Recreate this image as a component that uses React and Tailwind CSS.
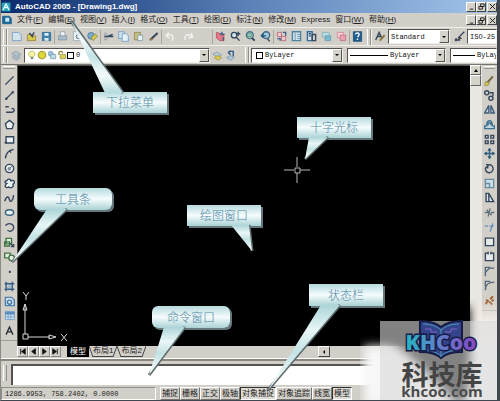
import React from 'react';
import clsx from 'clsx';

const MENUS = [
  ['文件', 'F'], ['编辑', 'E'], ['视图', 'V'], ['插入', 'I'], ['格式', 'O'], ['工具', 'T'],
  ['绘图', 'D'], ['标注', 'N'], ['修改', 'M'], ['Express', ''], ['窗口', 'W'], ['帮助', 'H'],
];

const N = '#34465c';
const B = '#5b8fc0';
const Y = '#d8c84a';
const L = '#d3e4ef';

// Every drawing sits in a 16x16 box
const ICONS = {
  app: <><rect x="1" y="1" width="14" height="14" fill="#2aa3b8" /><path d="M3 13 8 3l5 10M5 9h6" stroke="#e8ffff" strokeWidth="2" /></>,
  doc: <><path d="M1 2h11l3 4v8H1z" fill="#176c9e" stroke="#114a78" /><path d="M6 5h5v5H6z" fill="#bfe4f5" stroke="#fff" /></>,
  new: <path d="M2 2h9l4 4v8H2z" fill={L} stroke={B} />,
  open: <><path d="M2 5h4l2 2h6v7H2z" fill={Y} stroke="#8a7a35" /><path d="m5 3 5 6M12 2 8 8" stroke={N} strokeWidth="2" /></>,
  save: <><path d="M2 2h12v12H2z" fill="#3f82b0" stroke="#275b86" /><path d="M5 3h6v4H5zM5 10h6v4H5z" fill="#d7eef5" /></>,
  print: <><path d="M5 7V1h6l1 6" fill="#eef5fa" stroke="#8698a8" /><path d="M2 7h12v6H2z" fill="#a9bccb" stroke="#7d8f9e" /></>,
  preview: <><path d="M2 1h8l3 3v10H2z" fill="#edf3f7" stroke="#8b9eb0" /><circle cx="9" cy="8" r="3" fill={L} stroke={N} /><path d="m11 10 4 5" stroke={N} strokeWidth="2" /></>,
  publish: <><circle cx="6" cy="7" r="5" fill="#78a9cf" stroke="#436e94" /><path d="m6 10 6-6 3 4-6 6z" fill={Y} stroke="#83813a" /></>,
  cut: <><path d="M2 8h13M7 8l7-3" stroke={N} strokeWidth="2" /><circle cx="4" cy="5" r="2" stroke="#7b8998" /><circle cx="4" cy="11" r="2" stroke="#7b8998" /></>,
  copy: <><path d="M1 1h8v10H1z" fill={L} stroke={B} /><path d="M6 4h6l3 3v8H6z" fill="#e5f2fa" stroke={B} /></>,
  paste: <><path d="M2 2h9v11H2z" fill="#c8bf7c" stroke="#857e52" /><path d="M7 6h7v8H7z" fill="#e8f1f4" stroke="#6e91a8" /></>,
  brush: <><path d="M3 13 14 3" stroke={N} strokeWidth="3" /><path d="m2 14 3-4 3 2z" fill="#a47c36" /></>,
  undo: <path d="M12 14c3-8-2-10-7-8m2-4L3 7l5 3" stroke="#f4f3f0" strokeWidth="2" />,
  redo: <path d="M3 13C2 4 9 4 13 8m-1-5 2 6-6 1" stroke="#f4f3f0" strokeWidth="2" />,
  pan: <><path d="M2 2v8l5 4h6V6H8L6 3z" fill="#e4778a" stroke="#af4358" /><path d="M10 1v5m-3-2 7 1M12 9v5" stroke="#41627f" strokeWidth="2" /></>,
  zoomIn: <><circle cx="6" cy="6" r="4" fill={L} stroke={N} strokeWidth="2" /><path d="m9 9 5 5M12 1v6m-3-3h6" stroke={N} strokeWidth="2" /></>,
  zoomWin: <><circle cx="7" cy="6" r="5" fill="#b4d8cf" stroke="#476f80" strokeWidth="2" /><path d="M4 4h5v4H4z" stroke="#308564" /><path d="m10 10 4 4" stroke={N} strokeWidth="3" /></>,
  zoomPrev: <><circle cx="9" cy="6" r="5" fill="#a4cadf" stroke="#3d6585" strokeWidth="2" /><path d="M2 7h7M5 4 2 7l3 3" stroke="#215277" strokeWidth="2" /><path d="m11 11 3 4" stroke={N} strokeWidth="2" /></>,
  props: <><path d="M2 2h6v6H2zM8 8h6v6H8z" fill="#efcbd2" stroke="#b44e65" /><path d="M10 2h4v5M2 11h4v3" stroke="#3e618b" strokeWidth="2" /></>,
  center: <><path d="M2 1h12v13H2z" fill={L} stroke="#4c83a0" strokeWidth="2" /><path d="M6 3v10M9 5h4M9 8h4M9 11h4" stroke="#4a7894" /></>,
  palettes: <><path d="M2 1h7v13H2z" fill={L} stroke="#356e9d" strokeWidth="2" /><path d="M9 5h5v9H9zM4 4h3M4 7h3" stroke={N} strokeWidth="2" /></>,
  sheets: <><path d="M2 2h10v7H2z" fill="#bddce2" stroke="#77a9b7" /><path d="M6 7h8v7H6z" fill="#77bcd0" stroke="#5794a8" /></>,
  markup: <><path d="M2 2h9v8H2z" fill="#f5d1d7" stroke="#ce7b8c" /><path d="M6 6h8v8H6z" fill="#eaa4af" stroke="#bf6575" /></>,
  help: <><path d="M2 1h12v14H2z" fill="#1b5f94" stroke="#134267" /><path d="M5 5c1-4 7-2 5 1L8 9m0 2v2" stroke="#fff" strokeWidth="2" /></>,
  textStyle: <><path d="m1 13 5-11 4 9M4 8h5" stroke={N} strokeWidth="2" /><path d="m7 14 7-8" stroke="#8b793f" strokeWidth="3" /></>,
  dimStyle: <><path d="M1 13h8M3 10v5M6 10l9-9" stroke={N} strokeWidth="2" /><path d="m5 13 3-5 4 3z" fill="#463f43" /></>,
  layers: <path d="m1 5 6-3 7 4-6 3zM1 8l7 4 6-4M1 11l7 4 6-4" fill="#b3c5d0" stroke="#8395a1" />,
  bulb: <><path d="M5 11c-5-4-2-9 3-9s7 6 2 9z" fill="#f5f2a4" stroke="#a8a447" /><path d="M6 13h4" stroke={N} strokeWidth="2" /></>,
  sun: <circle cx="8" cy="8" r="6" fill="#dfd638" stroke="#aaa23c" strokeWidth="2" />,
  freeze: <><circle cx="6" cy="6" r="4" fill="#a1c6db" stroke="#6089aa" /><path d="M6 7h8v7H6z" fill="#c2dce8" stroke="#6089aa" /></>,
  lock: <><path d="M3 8V5c0-4 6-4 6 0" stroke="#898838" strokeWidth="2" /><path d="M5 7h9v7H5z" fill="#d9d254" stroke="#8c8843" /></>,
  layerPrev: <><path d="m1 6 6-3 7 4-6 3z" fill="#b5cbd5" stroke="#84959e" /><path d="m3 11 5-3 6 3-5 4z" fill={Y} stroke="#9d913d" /></>,
  layerBack: <><path d="m2 11 6-3 6 3-6 4z" fill="#a9c5d7" stroke="#7894a7" /><path d="M5 2h7v7M9 1 5 4l3 3" stroke="#325987" strokeWidth="2" /></>,

  line: <path d="M2 14 14 2" stroke={N} strokeWidth="2" />,
  xline: <><path d="M2 14 14 2" stroke={N} strokeWidth="2" /><path d="M2 11h3v3H2zM11 2h3v3h-3z" fill={N} /></>,
  pline: <path d="M2 4h5m-4 8h8c5 0 5-7 0-5" stroke={N} strokeWidth="2" />,
  polygon: <path d="m8 2 6 5-2 7H4L2 7z" fill="#edf2f4" stroke={N} strokeWidth="2" />,
  rect: <><path d="M3 4h11v9H3z" fill="#edf2f4" stroke={N} strokeWidth="2" /><path d="M1 11h3v3H1z" fill={N} /></>,
  arc: <path d="M2 15C3 7 7 3 14 2m-6 1 2 4" stroke={N} strokeWidth="2" />,
  circle: <><circle cx="8" cy="8" r="6" fill="#edf2f4" stroke={N} strokeWidth="2" /><path d="m8 8 4-4M6 7h3v3H6z" stroke={N} /></>,
  cloud: <path d="M4 4c2-4 6-2 6 0 6-2 6 4 3 5 2 5-4 6-6 4-5 3-7-2-3-5-4-1-3-4 0-4z" fill="#edf2f4" stroke={N} strokeWidth="2" />,
  spline: <path d="M1 12c3-9 6-7 7-2 2 5 5 1 6-7" stroke={N} strokeWidth="2" />,
  ellipse: <ellipse cx="8" cy="8" rx="6" ry="4" fill="#edf2f4" stroke="#315f7c" strokeWidth="2" />,
  ellArc: <path d="M2 5c7-6 15 0 11 6-2 3-5 3-8 1" stroke={N} strokeWidth="2" />,
  insert: <><path d="M3 2h8v8H3zM1 7h7v6H1z" fill="#e3efe2" stroke="#417544" strokeWidth="2" /><path d="m9 9 5 5m0-4v4h-4" stroke={N} strokeWidth="2" /></>,
  block: <><path d="M1 3h8v7H1z" fill="#e3efe2" stroke="#417544" strokeWidth="2" /><circle cx="11" cy="10" r="4" fill="#e4eee7" stroke="#417544" strokeWidth="2" /></>,
  point: <path d="M7 7h3v3H7z" fill={N} />,
  hatch: <><path d="M3 1v14M12 1v14M1 4h14M1 12h14" stroke="#345f84" strokeWidth="2" /><path d="m4 11 7-7M6 12l6-6" stroke={B} /></>,
  region: <><path d="M2 2h9l4 4v8H2z" fill={L} stroke="#4e7eaa" strokeWidth="2" /><circle cx="8" cy="9" r="3" stroke="#4478a7" strokeWidth="2" /></>,
  table: <><path d="M2 2h13v12H2z" fill={L} stroke={B} /><path d="M2 3h13v3H2zM6 3v11M10 3v11M2 10h13" fill={B} stroke={B} /></>,
  mtext: <path d="M3 14 8 3l5 11M5 10h6" stroke="#242c36" strokeWidth="2" />,

  erase: <><path d="M3 13 13 2" stroke="#756744" strokeWidth="3" /><path d="m2 10 6 1-2 4H1z" fill={Y} stroke="#8e8444" /></>,
  copyObj: <><circle cx="4" cy="4" r="3" stroke={N} strokeWidth="2" /><circle cx="10" cy="12" r="3" stroke={N} strokeWidth="2" /><path d="M8 4h5v5" stroke={N} strokeWidth="2" /></>,
  mirror: <path d="M7 2v11H1zM10 2v11h5z" fill="#c6d6df" stroke="#3d5d79" strokeWidth="2" />,
  offset: <path d="M1 14h14v-4h-3c0-10-8-10-8 0H1zM6 9c0-5 4-5 4 0" fill="#c1d9e3" stroke="#3e7091" strokeWidth="2" />,
  array: <path d="M2 2h4v4H2zM10 2h4v4h-4zM2 10h4v4H2zM10 10h4v4h-4z" stroke={N} strokeWidth="2" />,
  move: <path d="M8 1v14M1 8h14M6 4l2-3 2 3M6 12l2 3 2-3M4 6 1 8l3 2M12 6l3 2-3 2" stroke="#34607f" strokeWidth="2" />,
  rotate: <path d="M5 3c9-3 11 9 4 11-7 1-9-7-4-9M3 2l3 1-1 5" stroke={N} strokeWidth="2" />,
  scale: <path d="M2 2h12v12H2zM2 8h6v6" fill="#cce0e9" stroke="#688ba0" strokeWidth="2" />,
  stretch: <path d="M3 2h4l7 12H3zM7 2v12" fill="#d9e2e6" stroke={N} strokeWidth="2" />,
  trim: <path d="M1 8h5m4 0h5M6 14 9 2M4 4l7 8" stroke="#62717d" strokeWidth="2" />,
  extend: <path d="M1 6h5m2 0h6M13 2 9 14" stroke="#638fc0" strokeWidth="2" />,
  breakAt: <path d="M2 3h12v11H2zM1 3h5M10 3h5" fill="#e8eaea" stroke={N} strokeWidth="2" />,
  breakObj: <path d="M6 3H2v11h12V3h-4M6 1v4M10 1v4" fill="#e8eaea" stroke={N} strokeWidth="2" />,
  chamfer: <path d="M2 15V9l6-6h7M2 9V2h7" stroke="#53687a" strokeWidth="2" />,
  fillet: <path d="M2 15C2 6 6 3 15 3M2 9V2h7" stroke="#53687a" strokeWidth="2" />,
  explode: <path d="m2 13 5-5M9 6l4-4M3 7l3 2M8 10l4 4M11 9l3-2" stroke="#9d5a2a" strokeWidth="3" />,
};

const Icon = ({ name, className = 'size-[11px]' }) => (
  <svg viewBox="0 0 16 16" fill="none" aria-hidden="true" className={`shrink-0 ${className}`}>{ICONS[name]}</svg>
);

const ToolButton = ({ name, className }) => (
  <button type="button" aria-label={name} className={clsx('flex items-center justify-center', className)}>
    <Icon name={name} />
  </button>
);

const Grip = () => (
  <span className="mr-0.5 h-4 w-1 shrink-0 border-x border-l-white border-r-[#908e88] shadow-[1px_0_#f5f4f0]" />
);

const Divider = () => <span className="h-3.5 w-px shrink-0 bg-[#aaa79f]" />;

const Group = ({ names }) => (
  <div className="flex shrink-0 gap-1">
    {names.map((n) => <ToolButton key={n} name={n} />)}
  </div>
);

const DropArrow = () => (
  <span aria-hidden="true" className="pointer-events-none flex w-2.5 shrink-0 items-center justify-center self-stretch border border-t-white border-l-white border-r-[#55534f] border-b-[#55534f] bg-[#d6d3cb]">
    <span className="border-x-2 border-t-2 border-x-transparent border-t-black" />
  </span>
);

const Combo = ({ label, value, lead, className, arrow = true }) => (
  <div className={clsx('flex h-[15px] items-center overflow-hidden border border-t-[#55534f] border-l-[#55534f] border-r-[#efeeea] border-b-[#efeeea] bg-white', className)}>
    {lead}
    <select aria-label={label} className="min-w-0 flex-1 appearance-none bg-transparent pl-0.5 font-['Liberation_Mono',monospace] text-[7px] leading-3 text-[#111]">
      <option>{value}</option>
    </select>
    {arrow && <DropArrow />}
  </div>
);

const WindowButtons = () => (
  <div className="flex shrink-0">
    {['M2 7h4', 'M3 1h4v3H3zM1 4h4v3H1z', 'm1 1 6 6M7 1 1 7'].map((d, i) => (
      <button key={d} type="button" aria-label={['minimize', 'restore', 'close'][i]}
        className={clsx('flex h-[10px] w-[10px] items-center justify-center border border-t-white border-l-white border-r-[#444] border-b-[#444] bg-[#d6d3cb]', i === 2 && 'ml-px')}>
        <svg viewBox="0 0 8 8" fill="none" stroke="#111" className="size-[7px]"><path d={d} /></svg>
      </button>
    ))}
  </div>
);

const DRAW = ['line', 'xline', 'pline', 'polygon', 'rect', 'arc', 'circle', 'cloud', 'spline', 'ellipse', 'ellArc', 'insert', 'block', 'point', 'hatch', 'region', 'table', 'mtext'];
const MODIFY = ['erase', 'copyObj', 'mirror', 'offset', 'array', 'move', 'rotate', 'scale', 'stretch', 'trim', 'extend', 'breakAt', 'breakObj', 'chamfer', 'fillet', 'explode'];

const SideBar = ({ names, className }) => (
  <div className={clsx('flex w-4 shrink-0 flex-col bg-[#d2cfc8]', className)}>
    <span className="mx-0.5 mt-px mb-1 h-[3px] border-y border-t-white border-b-[#9d9a94]" />
    <div className={clsx('flex flex-col', names.length === 18 ? 'h-[265px]' : 'h-[235px]')}>
      {names.map((n) => <ToolButton key={n} name={n} className="min-h-0 flex-1" />)}
    </div>
    <span className="mt-0.5 h-px bg-[#a29f99]" />
  </div>
);

const STATUS = ['捕捉', '栅格', '正交', '极轴', '对象捕捉', '对象追踪', '线宽', '模型'];

const CALLOUTS = [
  { text: '下拉菜单', box: 'left-[92px] top-[92px] h-[21px] w-[74px]', tail: '104,93 70,21 122,93' },
  { text: '工具条', box: 'left-[33px] top-[188px] h-[22px] w-[78px] rounded-md', tail: '46,209 11,262 66,209' },
  { text: '十字光标', box: 'left-[296px] top-[117px] h-[21px] w-[74px]', tail: '308,137 304,159 327,137' },
  { text: '绘图窗口', box: 'left-[186px] top-[205px] h-[21px] w-[74px]', tail: '230,225 251,251 248,225' },
  { text: '命令窗口', box: 'left-[151px] top-[306px] h-[22px] w-[78px] rounded-md', tail: '163,327 148,375 184,327' },
  { text: '状态栏', box: 'left-[308px] top-[284px] h-[22px] w-[74px]', tail: '320,305 267,390 339,305' },
];

const Callouts = () => (
  <div className="pointer-events-none absolute inset-0 overflow-hidden">
    {CALLOUTS.map((c) => (
      <div key={c.text} className={`absolute flex items-center justify-center bg-linear-to-b from-[#b5dadd] via-[#f6fcfd] to-[#a9d2d5] pb-px font-['Noto_Sans_CJK_SC',sans-serif] text-[12px] leading-4 font-light text-[#5088a4] shadow-[2px_2px_#66787b] ${c.box}`}>
        {c.text}
      </div>
    ))}
    <svg width="500" height="401" className="absolute top-0 left-0">
      <defs>
        <linearGradient id="tail" x1="0" y1="0" x2="0" y2="1">
          <stop offset="0" stopColor="#acd5d8" />
          <stop offset=".3" stopColor="#e9f6f7" />
          <stop offset=".55" stopColor="#c3e2e4" />
          <stop offset="1" stopColor="#fff" />
        </linearGradient>
        <linearGradient id="tailUp" x1="0" y1="0" x2="0" y2="1">
          <stop offset="0" stopColor="#b5dadd" />
          <stop offset=".25" stopColor="#f4fbfb" />
          <stop offset=".5" stopColor="#c5e2e4" />
          <stop offset=".75" stopColor="#f4fbfb" />
          <stop offset="1" stopColor="#b5dadd" />
        </linearGradient>
      </defs>
      {CALLOUTS.map((c, i) => (
        <g key={c.text}>
          <polyline points={c.tail.split(' ').slice(1).join(' ')} fill="none" stroke="#5c696b" strokeWidth="3" />
          <polygon points={c.tail} fill={i ? 'url(#tail)' : 'url(#tailUp)'} />
        </g>
      ))}
    </svg>
  </div>
);

const Watermark = () => (
  <div className="pointer-events-none absolute -right-[3px] -bottom-px h-[111px] w-[140px]">
    <svg viewBox="0 0 140 111" className="size-full">
      <defs>
        <filter id="soft" x="-20%" y="-20%" width="140%" height="140%"><feGaussianBlur stdDeviation="5" /></filter>
        <linearGradient id="brand"><stop offset="0" stopColor="#24b6c1" /><stop offset=".45" stopColor="#5f82c9" /><stop offset="1" stopColor="#8b46c4" /></linearGradient>
        <linearGradient id="pale" x1="0" y1="0" x2="0" y2="1"><stop offset="0" stopColor="#eee5da" stopOpacity="0" /><stop offset=".25" stopColor="#f6f2ec" /><stop offset="1" stopColor="#fff" /></linearGradient>
      </defs>
      <path d="M110 8h30v103h-30z" fill="url(#pale)" />
      <path d="M4 56h136v60H4z" fill="#f7f7f7" filter="url(#soft)" />
      <path d="M24 17h86v43l-2 40-8 16L60 75 24 44z" fill="#000" filter="url(#soft)" />
      <path d="M20 31h120v80H20z" fill="#d9d9d9" opacity=".6" />
      <g fill="#34448a" stroke="#171c46" strokeWidth="2">
        <path d="M60 31c8 0 15 1 21 6 6-5 13-6 21-6v31c-8 0-16 1-21 6-5-5-13-6-21-6z" />
        <path d="M63 34c8 0 13 2 18 6 5-4 10-6 18-6M63 60c8 0 13 2 18 6 5-4 10-6 18-6M81 39v28" fill="none" stroke="#4b9abd" strokeWidth="1" />
        <path d="M65 39h6v3h6M97 39h-6v3h-6M66 58v-3h7M96 58v-3h-7" fill="none" stroke="#8165c2" strokeWidth="1" />
      </g>
      <text x="81" y="60" textAnchor="middle" fontSize="21" fontWeight="800" fontFamily="Open Sans, sans-serif" fill="url(#brand)" stroke="#171c46" strokeWidth="3" paintOrder="stroke">KHCoo</text>
      <text x="82" y="95" textAnchor="middle" fontSize="27" fontWeight="700" fontFamily="Noto Sans CJK SC, sans-serif" fill="#444">科技库</text>
      <text x="82" y="107" textAnchor="middle" fontSize="15" fontWeight="700" fontFamily="Open Sans, sans-serif" fill="#4c4c4c">khcoo.com</text>
    </svg>
  </div>
);

const SheetTab = ({ children }) => (
  <button type="button" className="flex h-[11px] text-[#222]">
    <svg viewBox="0 0 4 11" fill="none" stroke="#444" className="h-[11px] w-1"><path d="m0 0 4 11" /></svg>
    <span className="h-[11px] border-b border-[#444]">{children}</span>
    <svg viewBox="0 0 4 11" fill="none" stroke="#444" className="h-[11px] w-1"><path d="m4 0-4 11" /></svg>
  </button>
);

const Canvas = () => (
  <main className="flex min-w-0 flex-1 flex-col">
    <div className="relative min-h-0 flex-1 border-t border-l border-[#55534f] bg-black">
      <svg viewBox="0 0 50 60" fill="none" stroke="#d6d6d6" className="absolute bottom-0 left-[3px] h-[60px] w-[50px]">
        <path d="M2 48h5v5H2zM4 48V18M7 51h22M2 24l2-6 2 6zM28 49l7 2-7 2z" />
        <path d="m2 6 3 4 3-4M5 10v4M40 48l6 7M46 48l-6 7" />
      </svg>
      <svg viewBox="0 0 28 28" fill="none" stroke="#b8b8b8" className="absolute top-[90px] left-[265px] size-7">
        <path d="M14 1v10M14 17v10M1 14h10M17 14h10M12 12h5v5h-5z" />
      </svg>
    </div>
    <div className="flex h-3 shrink-0 items-start bg-[#d2cfc8] text-[8px] leading-[10px]">
      {['M3 2v6M8 2 4 5l4 3z', 'M7 2 3 5l4 3z', 'M3 2l4 3-4 3z', 'M2 2l4 3-4 3zM7 2v6'].map((d) => (
        <button key={d} type="button" aria-label="tab scroll" className="h-[11px] w-[11px] border border-t-white border-l-white border-r-[#888] border-b-[#888]">
          <svg viewBox="0 0 10 10" fill="#111" stroke="#111" className="size-[9px]"><path d={d} /></svg>
        </button>
      ))}
      <button type="button" className="ml-1.5 h-[11px] bg-black px-[3px] text-white">模型</button>
      <SheetTab>布局1</SheetTab>
      <SheetTab>布局2</SheetTab>
      <button type="button" aria-label="scroll left" className="ml-auto mr-[140px] flex h-[11px] w-3 items-center justify-center border border-t-white border-l-white border-r-[#444] border-b-[#444]">
        <span className="border-y-2 border-r-2 border-y-transparent border-r-black" />
      </button>
    </div>
  </main>
);

export default function App() {
  return (
    <div className="relative flex min-h-screen flex-col overflow-hidden border-r-[3px] border-b border-[#41474e] border-l border-l-[#8c8a86] bg-[#d2cfc8] font-['Liberation_Sans','Noto_Sans_CJK_SC',sans-serif] text-[#222]">
      <header className="flex h-[13px] shrink-0 items-center gap-1 bg-linear-to-r from-[#0b2a6b] via-[#5a82b8] to-[#a5c5ea]">
        <Icon name="app" className="size-[10px]" />
        <h1 className="flex-1 text-[8px] leading-3 font-bold whitespace-nowrap text-white">AutoCAD 2005 - [Drawing1.dwg]</h1>
        <WindowButtons />
      </header>

      <nav className="flex h-[14px] shrink-0 items-center gap-[5px] pl-px text-[8px] leading-3 whitespace-nowrap">
        <Icon name="doc" className="size-[10px]" />
        {MENUS.map(([t, k]) => (
          <button key={t} type="button" className="shrink-0">
            {t}{k && <>(<u>{k}</u>)</>}
          </button>
        ))}
        <span className="flex-1" />
        <WindowButtons />
      </nav>

      <div className="flex h-[18px] shrink-0 items-center gap-0.5 border-t border-[#efeeea] pl-0.5">
        <Grip />
        <Group names={['new', 'open', 'save']} />
        <Divider />
        <Group names={['print', 'preview', 'publish']} />
        <Divider />
        <Group names={['cut', 'copy', 'paste', 'brush']} />
        <Divider />
        <div className="mr-4 flex gap-2"><ToolButton name="undo" /><ToolButton name="redo" /></div>
        <Divider />
        <Group names={['pan', 'zoomIn', 'zoomWin', 'zoomPrev']} />
        <Divider />
        <Group names={['props', 'center', 'palettes', 'sheets', 'markup']} />
        <Divider />
        <Group names={['help']} />
        <span className="flex-1" />
        <Grip />
        <ToolButton name="textStyle" />
        <Combo label="Text style" value="Standard" className="w-[62px] shrink-0" />
        <span className="w-px" />
        <ToolButton name="dimStyle" />
        <Combo label="Dimension style" value="ISO-25" className="w-[30px] shrink-0" arrow={false} />
      </div>

      <div className="flex h-[19px] shrink-0 items-center gap-1 border-t border-[#efeeea] pl-0.5">
        <div className="flex flex-1 items-center gap-0.5">
          <Grip />
          <ToolButton name="layers" />
          <Combo label="Layer" value="0" className="w-[186px] shrink-0" lead={(
            <span className="flex shrink-0 items-center pl-0.5">
              <Icon name="bulb" className="size-[10px]" />
              <Icon name="sun" className="size-[10px]" />
              <Icon name="freeze" className="size-[10px]" />
              <Icon name="lock" className="size-[10px]" />
              <span className="size-[7px] border border-black bg-white" />
            </span>
          )} />
          <ToolButton name="layerPrev" />
          <ToolButton name="layerBack" />
        </div>
        <div className="flex shrink-0 items-center">
          <Grip />
          <Combo label="Color" value="ByLayer" className="w-[92px]" lead={<span className="ml-1 size-[7px] shrink-0 border border-black" />} />
        </div>
        <Combo label="Linetype" value="ByLayer" className="w-[99px] shrink-0" lead={<span className="ml-0.5 h-px w-[38px] shrink-0 bg-black" />} />
        <Combo label="Lineweight" value="ByLayer" className="w-[47px] shrink-0" arrow={false} lead={<span className="ml-0.5 h-px w-[22px] shrink-0 bg-black" />} />
      </div>

      <div className="flex min-h-0 flex-1 border-t border-[#77756f]">
        <SideBar names={DRAW} />
        <Canvas />
        <div className="flex w-[11px] shrink-0 flex-col bg-[#eae7e3]">
          <button type="button" aria-label="scroll up" className="flex h-[10px] items-center justify-center border border-t-white border-l-white border-r-[#666] border-b-[#666] bg-[#d6d3cb]">
            <span className="border-x-2 border-b-[3px] border-x-transparent border-b-black" />
          </button>
          <span className="h-[11px] border border-t-white border-l-white border-r-[#666] border-b-[#666] bg-[#d6d3cb]" />
        </div>
        <SideBar names={MODIFY} className="border-l border-[#eae7e3]" />
      </div>

      <div className="flex h-[27px] shrink-0 items-end gap-1 border-t border-white pl-0.5 shadow-[inset_0_2px_#88867f]">
        <span className="mb-1 h-4 w-1 border-x border-l-white border-r-[#908e88]" />
        <input aria-label="Command line" className="h-[21px] min-w-0 flex-1 border-t-2 border-l-2 border-[#55534f] bg-white text-[8px]" />
      </div>

      <footer className="flex h-[15px] shrink-0 items-center text-[8px] leading-3 whitespace-nowrap">
        <output className="mt-px mr-1 h-[13px] w-[155px] border border-t-[#908e88] border-l-[#908e88] border-r-white border-b-white pl-[3px] font-['Liberation_Mono',monospace] text-[7px] leading-3">1286.9953, 758.2402, 0.0000</output>
        {STATUS.map((s) => {
          const on = s === '对象捕捉' || s === '模型';
          return (
            <button key={s} type="button" aria-pressed={on}
              className={clsx('mt-px h-[13px] border px-px leading-[11px]', on ? 'border-t-[#333] border-l-[#333] border-r-white border-b-white bg-[#dedbd4]' : 'border-t-white border-l-white border-r-[#77756f] border-b-[#77756f]')}>
              {s}
            </button>
          );
        })}
      </footer>

      <Watermark />
      <Callouts />
    </div>
  );
}
